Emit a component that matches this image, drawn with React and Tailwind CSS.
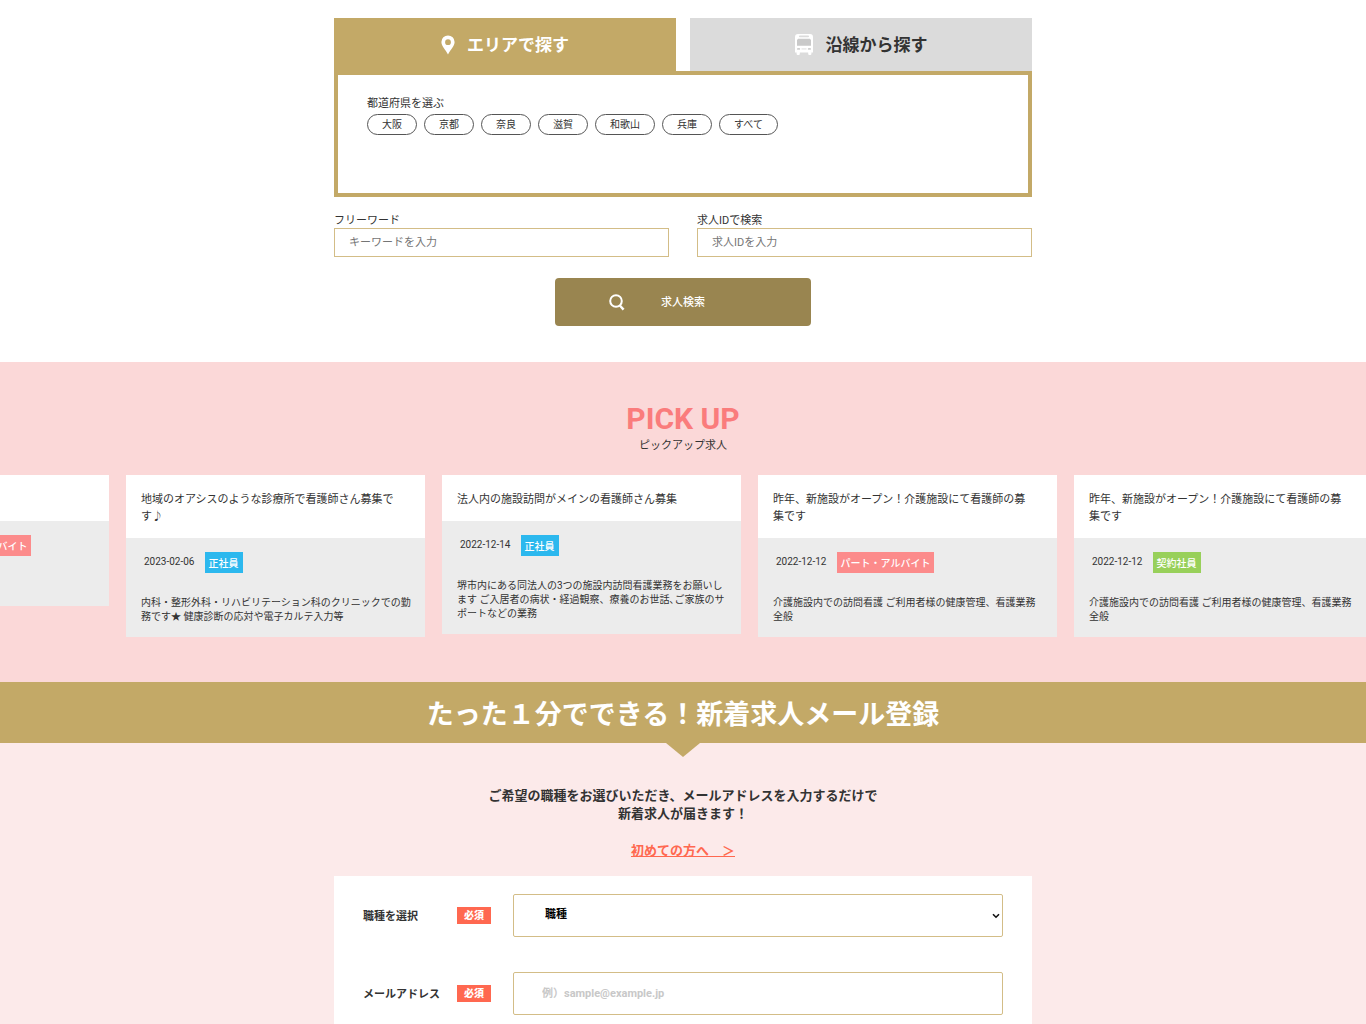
import React from "react";

const prefectures = ["大阪", "京都", "奈良", "滋賀", "和歌山", "兵庫", "すべて"];

const badgeColors = {
  正社員: "bg-[#2cb8ee]",
  "パート・アルバイト": "bg-[#fc8b8b]",
  契約社員: "bg-[#98d05a]",
};

const jobs = [
  {
    title: "看護師さん募集",
    date: "2023-02-06",
    types: ["正社員", "パート・アルバイト"],
    text: "看護業務全般",
  },
  {
    title: "地域のオアシスのような診療所で看護師さん募集です♪",
    date: "2023-02-06",
    types: ["正社員"],
    text: "内科・整形外科・リハビリテーション科のクリニックでの勤務です★ 健康診断の応対や電子カルテ入力等",
  },
  {
    title: "法人内の施設訪問がメインの看護師さん募集",
    date: "2022-12-14",
    types: ["正社員"],
    text: "堺市内にある同法人の3つの施設内訪問看護業務をお願いします ご入居者の病状・経過観察、療養のお世話､ご家族のサポートなどの業務",
  },
  {
    title: "昨年、新施設がオープン！介護施設にて看護師の募集です",
    date: "2022-12-12",
    types: ["パート・アルバイト"],
    text: "介護施設内での訪問看護 ご利用者様の健康管理、看護業務全般",
  },
  {
    title: "昨年、新施設がオープン！介護施設にて看護師の募集です",
    date: "2022-12-12",
    types: ["契約社員"],
    text: "介護施設内での訪問看護 ご利用者様の健康管理、看護業務全般",
  },
];

function PinIcon() {
  return (
    <svg viewBox="0 0 14 20" className="h-5 w-[14px]" fill="currentColor" aria-hidden="true">
      <path
        fillRule="evenodd"
        d="M7 .4A6.600 6.600 0 0 0 .4 7C.4 11.200 4.600 14.500 7 19.400C9.400 14.500 13.600 11.200 13.600 7A6.600 6.600 0 0 0 7 .4ZM7 4.300A2.900 2.900 0 1 1 7 10.100A2.900 2.900 0 0 1 7 4.300Z"
      />
    </svg>
  );
}

function BusIcon() {
  return (
    <svg viewBox="0 0 18 21" className="h-[21px] w-[18px]" aria-hidden="true">
      <path
        fill="#fff"
        d="M3 0H15Q18 0 18 3V18.500H16.400V20Q16.400 21 15.200 21H14.300Q13.200 21 13.200 20V18.500H4.800V20Q4.800 21 3.700 21H2.800Q1.600 21 1.600 20V18.500H0V3Q0 0 3 0Z"
      />
      <rect x="4" y="1.600" width="10" height="1.600" rx=".8" fill="#dbdbdb" />
      <path fill="#c9c9c9" d="M3.200 4.800H14.800L16 6V11.800H2V6Z" />
      <rect x="2" y="14" width="3.200" height="1.800" rx=".9" fill="#cfcfcf" />
      <rect x="12.800" y="14" width="3.200" height="1.800" rx=".9" fill="#cfcfcf" />
      <rect x="6.500" y="14.200" width="5" height="1.400" fill="#e6e6e6" />
    </svg>
  );
}

function SearchIcon() {
  return (
    <svg viewBox="0 0 16 17" className="h-[17px] w-4" fill="none" stroke="currentColor" strokeWidth="2" aria-hidden="true">
      <circle cx="7" cy="7" r="5.800" />
      <path d="M10.600 11.200L14.600 15.600" strokeWidth="2.400" />
    </svg>
  );
}

function SearchForm() {
  return (
    <form className="mx-auto w-full max-w-[698px] pt-[18px] pb-9">
      <div className="grid grid-cols-2 gap-[14px] text-[17px] font-bold">
        <button type="button" className="flex h-[53px] items-center justify-center gap-3 bg-[#c3a967] text-white">
          <PinIcon />
          <span className="pt-[3px]">エリアで探す</span>
        </button>
        <button type="button" className="flex h-[53px] items-center justify-center gap-[13px] bg-[#dbdbdb]">
          <BusIcon />
          <span className="pt-[3px]">沿線から探す</span>
        </button>
      </div>
      <div className="min-h-[126px] border-4 border-[#c3a967] px-[29px] pt-5">
        <p className="text-[11px] leading-[17px]">都道府県を選ぶ</p>
        <div className="mt-[2px] flex flex-wrap gap-[7px]">
          {prefectures.map((name) => (
            <button
              type="button"
              key={name}
              className="h-[21px] rounded-full border border-[#555] px-[14px] text-[10px] leading-none"
            >
              {name}
            </button>
          ))}
        </div>
      </div>
      <div className="mt-4 grid grid-cols-2 gap-7 text-[11px]">
        <label className="block leading-[15px]">
          フリーワード
          <input
            type="text"
            placeholder="キーワードを入力"
            className="block h-[29px] w-full border border-[#d3bd87] px-[14px] placeholder:text-[#757575]"
          />
        </label>
        <label className="block leading-[15px]">
          求人IDで検索
          <input
            type="text"
            placeholder="求人IDを入力"
            className="block h-[29px] w-full border border-[#d3bd87] px-[14px] placeholder:text-[#757575]"
          />
        </label>
      </div>
      <button
        type="submit"
        className="mx-auto mt-[21px] grid h-12 w-64 grid-cols-[1fr_auto_1fr] items-center rounded-[4px] bg-[#998550] text-[11px] font-medium text-white"
      >
        <span className="flex justify-end pr-9">
          <SearchIcon />
        </span>
        <span className="pt-[3px]">求人検索</span>
      </button>
    </form>
  );
}

function JobCard({ job }) {
  return (
    <article className="w-[299px] shrink-0 bg-[#ececec]">
      <h3 className="bg-white pt-4 pr-7 pb-[13px] pl-[15px] text-[11px] leading-[17px]">{job.title}</h3>
      <div className="pt-[14px] pr-[13px] pb-[13px] pl-[15px] text-[10px]">
        <div className="flex items-start gap-[7px] pl-[3px]">
          <time className="pr-[3px] leading-[19px]">{job.date}</time>
          {job.types.map((type) => (
            <span
              key={type}
              className={`px-1 pt-[2px] text-[10px] leading-[19px] font-medium whitespace-nowrap text-white ${badgeColors[type]}`}
            >
              {type}
            </span>
          ))}
        </div>
        <p className="mt-[23px] leading-[14px]">{job.text}</p>
      </div>
    </article>
  );
}

function PickUp() {
  return (
    <section className="overflow-hidden bg-[#fbd8d8] pt-[39px] pb-[45px]">
      <div className="text-center">
        <h2 className="text-[30px] leading-9 font-bold text-[#fa7c7c]">PICK UP</h2>
        <p className="text-[11px] leading-[18px]">ピックアップ求人</p>
      </div>
      <div className="mt-5 -ml-[190px] flex items-start gap-[17px]">
        {jobs.map((job, i) => (
          <JobCard key={i} job={job} />
        ))}
      </div>
    </section>
  );
}

function FieldLabel({ htmlFor, children }) {
  return (
    <label htmlFor={htmlFor} className="flex w-32 shrink-0 items-center justify-between text-[11px] font-bold">
      <span className="pt-1">{children}</span>
      <span className="bg-[#ff6850] px-[7px] text-[10px] leading-[17px] font-black text-white">必須</span>
    </label>
  );
}

function MailRegistration() {
  return (
    <section className="bg-[#fceaea]">
      <h2 className="bg-[#c3a967] pt-[6px] text-center text-[27px] leading-[55px] font-bold text-white">
        たった１分でできる！新着求人メール登録
      </h2>
      <svg viewBox="0 0 34 14" className="mx-auto block h-[14px] w-[34px]" fill="#c3a967" aria-hidden="true">
        <path d="M0 0H34L17 14Z" />
      </svg>
      <div className="pt-[30px] text-center text-[13px] leading-[18px] font-bold">
        <p>
          ご希望の職種をお選びいただき、メールアドレスを入力するだけで
          <br />
          新着求人が届きます！
        </p>
        <a href="#first" className="mt-[19px] inline-block text-[#ff6850] underline">
          初めての方へ　＞
        </a>
      </div>
      <form className="mx-auto mt-4 w-full max-w-[698px] bg-white px-[29px] pt-[18px] pb-[9px]">
        <div className="flex items-center gap-[22px]">
          <FieldLabel htmlFor="job">職種を選択</FieldLabel>
          <div className="relative min-w-0 flex-1">
            <select
              id="job"
              className="block h-[43px] w-full appearance-none rounded-[2px] border border-[#d3bd87] bg-white pl-[31px] text-[11px] font-bold text-black"
            >
              <option>職種</option>
            </select>
            <svg
              viewBox="0 0 8 6"
              className="pointer-events-none absolute top-[19px] right-[3px] h-[6px] w-2"
              fill="none"
              stroke="#111"
              strokeWidth="1.600"
              aria-hidden="true"
            >
              <path d="M1 1.200L4 4.200L7 1.200" />
            </svg>
          </div>
        </div>
        <div className="mt-[35px] flex items-center gap-[22px]">
          <FieldLabel htmlFor="mail">メールアドレス</FieldLabel>
          <input
            id="mail"
            type="email"
            placeholder="例）sample@example.jp"
            className="h-[43px] min-w-0 flex-1 rounded-[2px] border border-[#d3bd87] px-7 text-[11px] font-bold placeholder:text-[#c8c8c8]"
          />
        </div>
      </form>
    </section>
  );
}

export default function App() {
  return (
    <main
      lang="ja"
      className="overflow-hidden bg-white font-[Roboto,'Noto_Sans_CJK_JP',sans-serif] text-[#333]"
    >
      <SearchForm />
      <PickUp />
      <MailRegistration />
    </main>
  );
}
